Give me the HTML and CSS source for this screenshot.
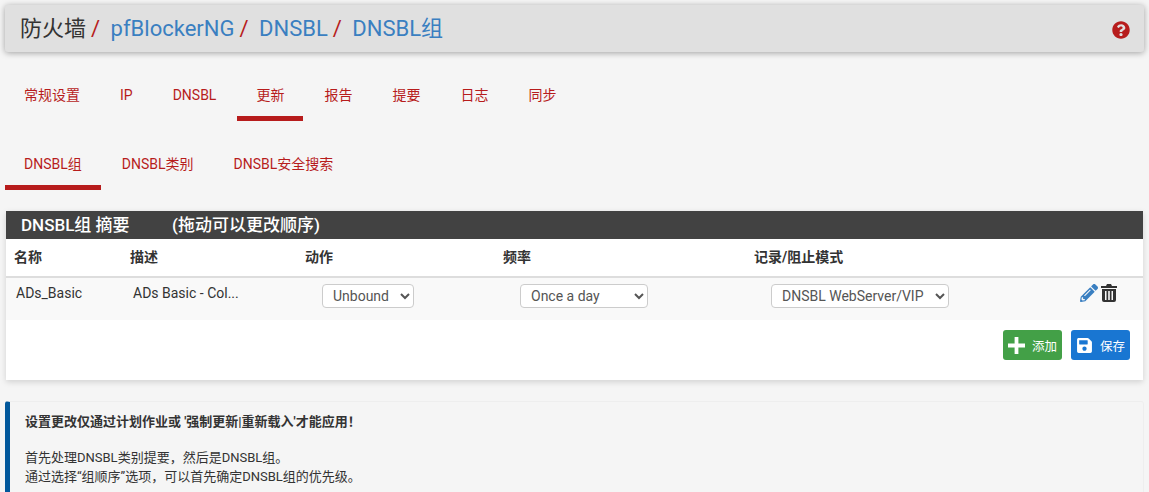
FILE: index.html
```html
<!DOCTYPE html>
<html lang="zh-CN">
<head>
    <meta charset="UTF-8">
    <meta name="viewport" content="width=device-width, initial-scale=1.0">
    <title>防火墙 / pfBlockerNG / DNSBL / DNSBL组</title>
    <link rel="stylesheet" href="styles.css">
</head>
<body>

    <header class="page-head">
        <ol class="crumbs">
            <li>防火墙</li>
            <li><a href="#">pfBlockerNG</a></li>
            <li><a href="#">DNSBL</a></li>
            <li><a href="#">DNSBL组</a></li>
        </ol>
        <a href="#" class="help" aria-label="帮助">
            <svg viewBox="0 0 512 512" class="help-icon"><path d="M504 256c0 136.997-111.043 248-248 248S8 392.997 8 256C8 119.083 119.043 8 256 8s248 111.083 248 248zM262.655 90c-54.497 0-89.255 22.957-116.549 63.758-3.536 5.286-2.353 12.415 2.715 16.258l34.699 26.31c5.205 3.947 12.621 3.008 16.665-2.122 17.864-22.658 30.113-35.797 57.303-35.797 20.429 0 45.698 13.148 45.698 32.958 0 14.976-12.363 22.667-32.534 33.976C247.128 238.528 216 254.941 216 296v4c0 6.627 5.373 12 12 12h56c6.627 0 12-5.373 12-12v-1.333c0-28.462 83.186-29.647 83.186-106.667 0-58.002-60.165-102-116.531-102zM256 338c-25.365 0-46 20.635-46 46 0 25.364 20.635 46 46 46s46-20.636 46-46c0-25.365-20.635-46-46-46z"/></svg>
        </a>
    </header>

    <nav class="tabs tabs-main">
        <a href="#">常规设置</a>
        <a href="#">IP</a>
        <a href="#">DNSBL</a>
        <a href="#" class="active">更新</a>
        <a href="#">报告</a>
        <a href="#">提要</a>
        <a href="#">日志</a>
        <a href="#">同步</a>
    </nav>

    <nav class="tabs tabs-sub">
        <a href="#" class="active">DNSBL组</a>
        <a href="#">DNSBL类别</a>
        <a href="#">DNSBL安全搜索</a>
    </nav>

    <section class="panel">
        <h2 class="panel-title"><span class="panel-name">DNSBL组 摘要</span><span class="panel-note">(拖动可以更改顺序)</span></h2>
        <table class="groups">
            <thead>
                <tr>
                    <th class="col-name">名称</th>
                    <th class="col-desc">描述</th>
                    <th class="col-action">动作</th>
                    <th class="col-freq">频率</th>
                    <th class="col-mode">记录/阻止模式</th>
                    <th></th>
                </tr>
            </thead>
            <tbody>
                <tr>
                    <td>ADs_Basic</td>
                    <td>ADs Basic - Col...</td>
                    <td><select class="sel-action"><option>Unbound</option></select></td>
                    <td><select class="sel-freq"><option>Once a day</option></select></td>
                    <td><select class="sel-mode"><option>DNSBL WebServer/VIP</option></select></td>
                    <td class="row-icons">
                        <svg viewBox="0 0 512 512" class="icon-edit"><path d="M497.9 142.1l-46.1 46.1c-4.7 4.7-12.3 4.7-17 0l-111-111c-4.7-4.7-4.7-12.3 0-17l46.1-46.1c18.7-18.7 49.1-18.7 67.9 0l60.1 60.1c18.8 18.7 18.8 49.1 0 67.9zM284.2 99.8L21.6 362.4.4 483.9c-2.9 16.4 11.4 30.6 27.8 27.8l121.5-21.3 262.6-262.6c4.7-4.7 4.7-12.3 0-17l-111-111c-4.8-4.7-12.4-4.7-17.1 0zM124.1 339.9c-5.5-5.5-5.5-14.3 0-19.8l154-154c5.5-5.5 14.3-5.5 19.8 0s5.5 14.3 0 19.8l-154 154c-5.5 5.5-14.3 5.5-19.8 0zM88 424h48v36.3l-64.5 11.3-31.1-31.1L51.7 376H88v48z"/></svg>
                        <svg viewBox="0 0 16 18" class="icon-trash"><path d="M6 0h4l1 2h5v2H0V2h5zM1 5h14v11a2 2 0 0 1-2 2H3a2 2 0 0 1-2-2zm3 2v9h1.5V7zm3.2 0v9h1.6V7zm3.3 0v9H12V7z"/></svg>
                    </td>
                </tr>
            </tbody>
        </table>
        <div class="panel-actions">
            <button class="btn btn-add">
                <svg viewBox="0 0 18 18" class="btn-icon"><path d="M7 0h4v7h7v4h-7v7H7v-7H0V7h7z"/></svg>
                添加
            </button>
            <button class="btn btn-save">
                <svg viewBox="0 0 448 512" class="btn-icon"><path d="M433.941 129.941l-83.882-83.882A48 48 0 0 0 316.118 32H48C21.49 32 0 53.49 0 80v352c0 26.51 21.49 48 48 48h352c26.51 0 48-21.49 48-48V163.882a48 48 0 0 0-14.059-33.941zM224 416c-35.346 0-64-28.654-64-64 0-35.346 28.654-64 64-64s64 28.654 64 64c0 35.346-28.654 64-64 64zm96-304.52V212c0 6.627-5.373 12-12 12H76c-6.627 0-12-5.373-12-12V108c0-6.627 5.373-12 12-12h228.52c3.183 0 6.235 1.264 8.485 3.515l3.48 3.48A11.996 11.996 0 0 1 320 111.48z"/></svg>
                保存
            </button>
        </div>
    </section>

    <aside class="note">
        <p class="note-lead">设置更改仅通过计划作业或 '强制更新|重新载入'才能应用！</p>
        <p>首先处理DNSBL类别提要，然后是DNSBL组。<br>通过选择“组顺序”选项，可以首先确定DNSBL组的优先级。</p>
    </aside>

</body>
</html>
```

FILE: styles.css
```css
/* Base Styles */
html {
    overflow: hidden;
}
body {
    margin: 0;
    padding: 5px 5px 0;
    font-family: Roboto, "Noto Sans CJK SC", sans-serif;
    font-size: 14px;
    color: #333;
    background-color: #f5f5f5;
}
a {
    text-decoration: none;
}

/* Page header */
.page-head {
    display: flex;
    align-items: center;
    justify-content: space-between;
    height: 47px;
    padding: 0 14px 0 15px;
    border-radius: 3px;
    background-color: #e0e0e0;
    box-shadow: 0 1px 6px rgba(0,0,0,0.35);
}
.crumbs {
    display: flex;
    align-items: baseline;
    margin: 0;
    padding: 0;
    list-style: none;
    font-size: 22px;
    line-height: 30px;
}
.crumbs li + li::before {
    content: "/";
    padding: 0 10.5px 0 5px;
    color: #b71c1c;
}
.crumbs a {
    color: #3a7fc1;
}
.help {
    display: flex;
    padding-top: 2px;
}
.help-icon {
    width: 18px;
    height: 18px;
    fill: #b71c1c;
}

/* Tabs */
.tabs {
    display: flex;
    gap: 2px;
}
.tabs a {
    padding: 7px 19px 11px;
    border-bottom: 5px solid transparent;
    line-height: 20px;
    color: #b71c1c;
}
.tabs a.active {
    border-bottom-color: #b71c1c;
}
.tabs-main {
    margin-top: 26px;
}
.tabs-sub {
    margin-top: 26px;
}

/* Panel */
.panel {
    margin: 21px 1px 0;
    background-color: #fff;
    box-shadow: 0 2px 6px rgba(0,0,0,0.15);
}
.panel-title {
    display: flex;
    margin: 0;
    padding: 0 15px 3px;
    height: 28px;
    box-sizing: border-box;
    align-items: center;
    font-size: 17px;
    font-weight: 500;
    color: #fff;
    background-color: #424242;
}
.panel-name {
    width: 151px;
}
.groups {
    width: 100%;
    border-collapse: collapse;
    table-layout: fixed;
}
.groups th {
    height: 38px;
    padding: 0 8px 3px;
    box-sizing: border-box;
    border-bottom: 2px solid #ddd;
    text-align: left;
    color: #333;
}
.col-name { width: 116px; }
.col-desc { width: 175px; }
.col-action { width: 198px; }
.col-freq { width: 251px; }
.col-mode { width: 326px; }
.groups td {
    height: 43px;
    padding: 6px 10px 0;
    background-color: #f9f9f9;
    vertical-align: top;
    box-sizing: border-box;
    line-height: 18px;
}
.groups td:nth-child(2) {
    padding-left: 11px;
}
.groups td:nth-child(n+3) {
    padding-left: 25px;
}
select {
    height: 24px;
    margin: 0;
    padding: 0 4px 0 6px;
    font-family: Roboto, sans-serif;
    font-size: 14px;
    color: #555;
    background-color: #fff;
    border: 1px solid #ccc;
    border-radius: 4px;
}
.sel-action { width: 92px; }
.sel-freq { width: 128px; }
.sel-mode { width: 178px; }
.groups td.row-icons {
    padding-left: 8px;
    white-space: nowrap;
}
.icon-edit {
    width: 18px;
    height: 18px;
    fill: #3a7fc1;
}
.icon-trash {
    width: 16px;
    height: 18px;
    fill: #333;
}
.panel-actions {
    display: flex;
    justify-content: flex-end;
    gap: 9px;
    height: 60px;
    padding: 10px 13px 0 0;
    box-sizing: border-box;
}
.btn {
    display: flex;
    align-items: center;
    height: 30px;
    width: 59px;
    padding: 0 0 0 5px;
    gap: 7px;
    border: none;
    border-radius: 3px;
    font-family: inherit;
    font-size: 12.5px;
    color: #fff;
    box-sizing: border-box;
}
.btn-icon {
    width: 17px;
    height: 17px;
    fill: #fff;
}
.btn-add {
    background-color: #43a047;
}
.btn-save {
    background-color: #1976d2;
}

/* Info note */
.note {
    margin-top: 21px;
    padding: 10px 20px 20px 15px;
    border: 1px solid #eee;
    border-left: 5px solid #01579b;
    border-radius: 3px;
    line-height: 19px;
    font-size: 13px;
}
.note p {
    margin: 0;
}
.note-lead {
    font-weight: bold;
    margin-bottom: 17px !important;
}
```
